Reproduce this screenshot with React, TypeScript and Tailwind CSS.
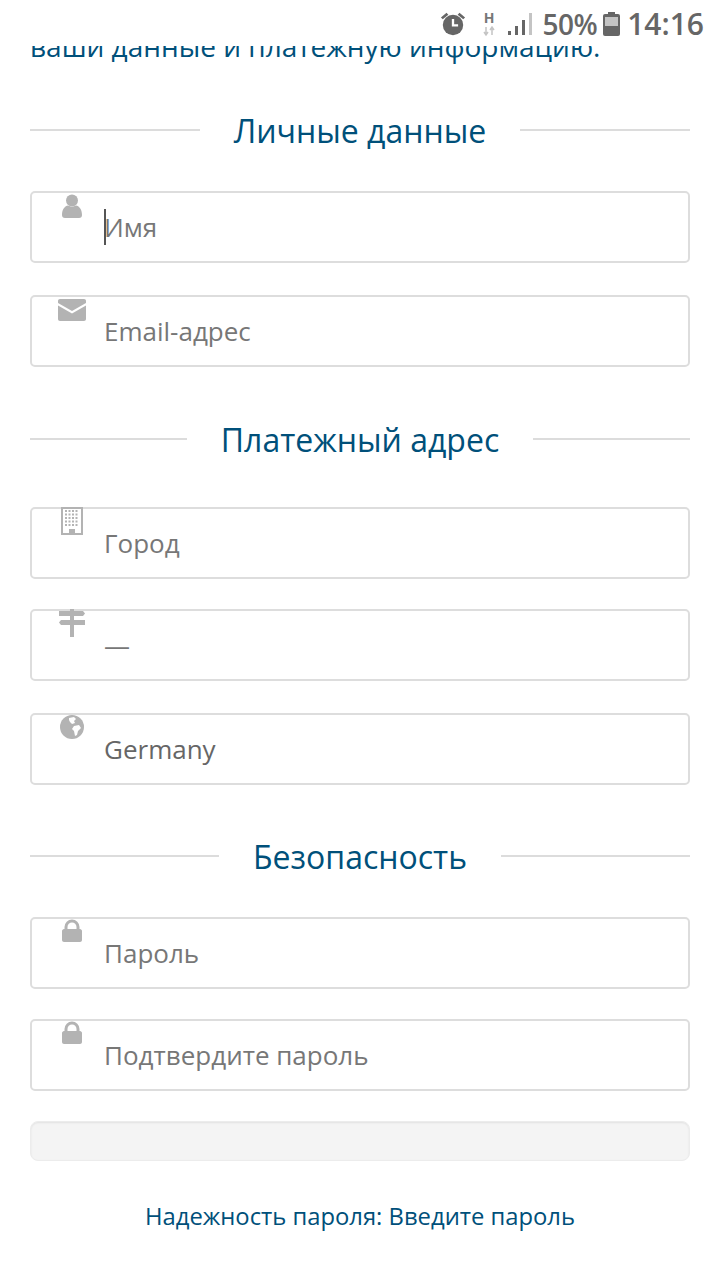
const font = { fontFamily: '"Open Sans", "Noto Sans", sans-serif' }

function UserIcon() {
  return (
    <svg width="22" height="26" viewBox="0 0 22 26" fill="#b3b3b3">
      <circle cx="11" cy="6.500" r="6" />
      <path d="M1 21c0-6 3-9 6-9.500 2.500 1.500 5.500 1.500 8 0 3 .5 6 3.500 6 9.500 0 2-1 3-3 3H4c-2 0-3-1-3-3z" />
    </svg>
  )
}

function MailIcon() {
  return (
    <svg width="30" height="24" viewBox="0 0 30 24" fill="#b3b3b3">
      <path d="M3 1h24c1.200 0 2 .8 2 2v2L15 13 1 5V3c0-1.200.8-2 2-2z" />
      <path d="M1 7.500l14 8 14-8V21c0 1.200-.8 2-2 2H3c-1.200 0-2-.8-2-2z" />
    </svg>
  )
}

function BuildingIcon() {
  const dots = []
  for (let r = 0; r < 5; r++) {
    for (let c = 0; c < 4; c++) {
      dots.push(<rect key={`${r}-${c}`} x={4 + c * 3.500} y={3 + r * 3.500} width="2" height="2" fill="#b3b3b3" />)
    }
  }
  return (
    <svg width="22" height="28" viewBox="0 0 22 28">
      <rect x="1" y="1" width="20" height="26" fill="#fff" stroke="#b3b3b3" strokeWidth="2" />
      {dots}
      <rect x="8" y="22" width="6" height="5" fill="#b3b3b3" />
    </svg>
  )
}

function SignIcon() {
  return (
    <svg width="28" height="30" viewBox="0 0 28 30" fill="#b3b3b3">
      <rect x="12" y="0" width="4" height="28" />
      <path d="M1 2h24l2 2.500-2 2.500H1z" />
      <path d="M27 11H3l-2 2.500L3 16h24z" />
    </svg>
  )
}

function GlobeIcon() {
  return (
    <svg width="24" height="24" viewBox="0 0 24 24">
      <circle cx="12" cy="12" r="12" fill="#b3b3b3" />
      <path d="M9 3l5-1 2 2-2 2 1 2-3 1-2-2-1-2zM14 11l5-1 2 3-3 3-1 4-2 1-1-5-2-2z" fill="#fff" />
    </svg>
  )
}

function LockIcon() {
  return (
    <svg width="20" height="24" viewBox="0 0 20 24" fill="#b3b3b3">
      <path d="M4 11V8a6 6 0 0 1 12 0v3" fill="none" stroke="#b3b3b3" strokeWidth="3" />
      <path d="M2 10h16c1 0 2 1 2 2v9c0 1-1 2-2 2H2c-1 0-2-1-2-2v-9c0-1 1-2 2-2z" />
    </svg>
  )
}

function Heading({ title }: { title: string }) {
  return (
    <div className="flex h-[36px] items-center gap-[34px]">
      <div className="mb-[2px] h-[2px] flex-1 bg-[#dcdcdc]" />
      <h2 className="text-[32px] leading-[36px] font-normal text-[#00507a]">{title}</h2>
      <div className="mb-[2px] h-[2px] flex-1 bg-[#dcdcdc]" />
    </div>
  )
}

function Field({
  icon,
  label,
  color = 'text-[#777777]',
  caret = false,
  iconClass,
  className = '',
}: {
  icon: React.ReactNode
  label: string
  color?: string
  caret?: boolean
  iconClass: string
  className?: string
}) {
  return (
    <div className={`relative flex h-[72px] items-center rounded-[5px] border-2 border-[#dddddd] bg-white pl-[73px] ${className}`}>
      <div className={`absolute leading-none ${iconClass}`}>{icon}</div>
      {caret && <div className="absolute top-[16px] left-[72px] h-[36px] w-[2px] bg-[#555555]" />}
      <span className={`ml-[-1px] text-[26px] leading-[36px] ${color}`}>{label}</span>
    </div>
  )
}

export default function App() {
  return (
    <div className="relative h-[1280px] w-[720px] overflow-hidden bg-white" style={font}>
      {/* status bar */}
      <div className="absolute top-0 left-0 z-10 flex h-[46px] w-full items-center justify-end bg-white pt-[2px] pr-[16px] text-[#666666]">
        <svg width="26" height="26" viewBox="0 0 28 28" fill="#666666">
          <circle cx="14" cy="15" r="11" />
          <path d="M14 8.500v7h5.500" fill="none" stroke="#fff" strokeWidth="2.500" />
          <path d="M1 7l6-5 2 2-6 5zM27 7l-6-5-2 2 6 5z" />
        </svg>
        <svg className="ml-[16px]" width="14" height="26" viewBox="0 0 14 26">
          <text x="7" y="12" textAnchor="middle" fontSize="14" fontWeight="700" fill="#777777">H</text>
          <path d="M4 16v8M2 21l2 3 2-3" stroke="#c4c4c4" strokeWidth="1.500" fill="none" />
          <path d="M10 24v-8M8 19l2-3 2 3" stroke="#c4c4c4" strokeWidth="1.500" fill="none" />
        </svg>
        <svg className="ml-[11px]" width="26" height="24" viewBox="0 0 26 24">
          <rect x="1" y="19" width="3" height="4" fill="#666666" />
          <rect x="8" y="14" width="3" height="9" fill="#666666" />
          <rect x="15" y="8" width="3" height="15" fill="#666666" />
          <rect x="22" y="1" width="3" height="22" fill="#c4c4c4" />
        </svg>
        <span className="ml-[9px] text-[28px] leading-[38px] font-semibold tracking-[-0.5px]">50%</span>
        <svg className="ml-[6px]" width="17" height="24" viewBox="0 0 17 24">
          <rect x="5" y="0" width="7" height="3" fill="#666666" />
          <rect x="0" y="2" width="17" height="22" rx="2" fill="#666666" />
          <rect x="2" y="5" width="13" height="9" fill="#c4c4c4" />
        </svg>
        <span className="ml-[7px] text-[30px] leading-[38px] font-semibold">14:16</span>
      </div>

      <div className="px-[30px]">
        <p className="mt-[28px] text-[28px] leading-[36px] text-[#00507a]">ваши данные и платежную информацию.</p>

        <div className="mt-[49px]">
          <Heading title="Личные данные" />
        </div>
        <Field className="mt-[42px]" icon={<UserIcon />} label="Имя" caret iconClass="top-[1px] left-[29px]" />
        <Field className="mt-[32px]" icon={<MailIcon />} label="Email-адрес" iconClass="top-[1px] left-[25px]" />

        <div className="mt-[55px]">
          <Heading title="Платежный адрес" />
        </div>
        <Field className="mt-[49px]" icon={<BuildingIcon />} label="Город" iconClass="top-[-2px] left-[29px]" />
        <Field className="mt-[30px]" icon={<SignIcon />} label="—" iconClass="top-[-2px] left-[26px]" />
        <Field className="mt-[32px]" icon={<GlobeIcon />} label="Germany" color="text-[#666666]" iconClass="top-[0px] left-[28px]" />

        <div className="mt-[54px]">
          <Heading title="Безопасность" />
        </div>
        <Field className="mt-[42px]" icon={<LockIcon />} label="Пароль" iconClass="top-[0px] left-[30px]" />
        <Field className="mt-[30px]" icon={<LockIcon />} label="Подтвердите пароль" iconClass="top-[0px] left-[30px]" />

        <div className="mt-[30px] h-[40px] rounded-[8px] border border-[#ececec] bg-[#f4f4f4] shadow-[inset_0_1px_2px_rgba(0,0,0,0.08)]" />
        <p className="mt-[37px] text-center text-[23.8px] leading-[36px] text-[#00507a]">Надежность пароля: Введите пароль</p>
      </div>
    </div>
  )
}
